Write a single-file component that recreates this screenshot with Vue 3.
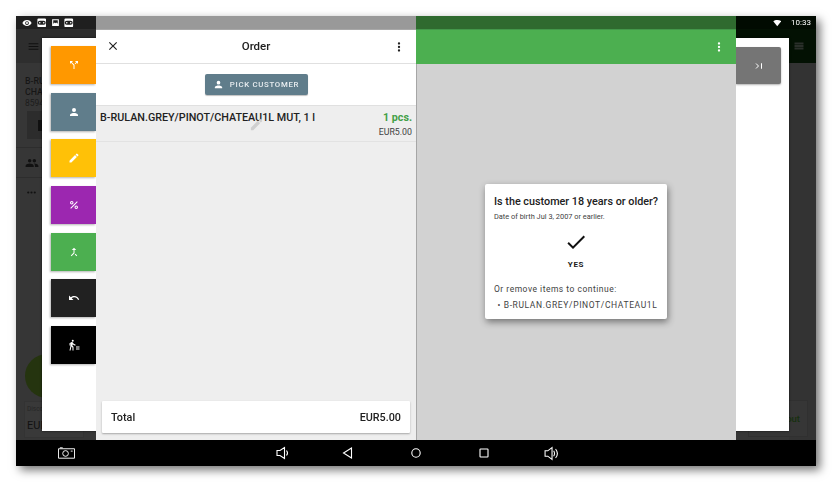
<script setup>
const actions = [
  { name: 'split', color: '#ff9800', d: 'M14 4l2.3 2.3-2.9 2.9 1.4 1.4 2.9-2.9L20 10V4zM10 4H4v6l2.3-2.3 4.7 4.7V20h2v-8.4L7.7 6.3z' },
  { name: 'customer', color: '#607d8b', d: 'M12 12a4 4 0 1 0 0-8 4 4 0 0 0 0 8zm0 2c-2.7 0-8 1.3-8 4v2h16v-2c0-2.7-5.3-4-8-4z' },
  { name: 'edit', color: '#ffc107', d: 'M3 17.25V21h3.75L17.81 9.94l-3.75-3.75zM20.71 7.04a1 1 0 0 0 0-1.41l-2.34-2.34a1 1 0 0 0-1.41 0l-1.83 1.83 3.75 3.75z' },
  { name: 'percent', color: '#9c27b0', d: 'M7.5 4a3.5 3.5 0 1 1 0 7 3.5 3.5 0 0 1 0-7zm0 2a1.5 1.5 0 1 0 0 3 1.5 1.5 0 0 0 0-3zm9 7a3.5 3.5 0 1 1 0 7 3.5 3.5 0 0 1 0-7zm0 2a1.5 1.5 0 1 0 0 3 1.5 1.5 0 0 0 0-3zM18 4.6l1.4 1.4L6 19.4 4.6 18z' },
  { name: 'merge', color: '#4caf50', d: 'M17 20.41L18.41 19 15 15.59 13.59 17 17 20.41zM7.5 8H11v5.59L5.59 19 7 20.41l6-6V8h3.5L12 3.5 7.5 8z' },
  { name: 'undo', color: '#212121', d: 'M12.5 8c-2.65 0-5.05 1-6.9 2.6L2 7v9h9l-3.62-3.62C8.77 11.2 10.54 10.5 12.5 10.5c3.54 0 6.55 2.31 7.6 5.5l2.37-.78C21.08 11.03 17.15 8 12.5 8z' },
  { name: 'walk', color: '#000000', d: 'M9.5 5.5a2 2 0 1 0 0-4 2 2 0 0 0 0 4zM5.9 8.9 3 23h2.1l1.8-8 2.1 2v6h2v-7.5l-2.1-2 .6-3C10.8 12 12.8 13 15 13v-2c-1.900 0-3.500-1-4.300-2.400l-1-1.600c-.4-.6-1-1-1.700-1-.3 0-.5.1-.8.1L3 8.300V13h2V9.600zM16 15h7v2h-7zM16 19h7v2h-7z' },
]
const reel = 'M4 1h16a3 3 0 0 1 3 3v16a3 3 0 0 1-3 3H4a3 3 0 0 1-3-3V4a3 3 0 0 1 3-3zm3 6a5 5 0 0 0 0 10h10a5 5 0 0 0 0-10zm0 3a2 2 0 1 1 0 4 2 2 0 0 1 0-4zm10 0a2 2 0 1 1 0 4 2 2 0 0 1 0-4z'
</script>

<template>
  <div class="page">
    <div class="screen">
      <div class="status">
        <div class="status-left">
          <svg class="st-icon eye" viewBox="0 0 24 24"><path d="M12 5C7 5 2.700 8.100 1 12c1.700 3.900 6 7 11 7s9.300-3.100 11-7c-1.700-3.900-6-7-11-7zm0 11.500a4.500 4.500 0 1 1 0-9 4.500 4.500 0 0 1 0 9zm0-7a2.500 2.500 0 1 0 0 5 2.500 2.500 0 0 0 0-5z" /></svg>
          <svg class="st-icon" viewBox="0 0 24 24"><path fill-rule="evenodd" :d="reel" /></svg>
          <svg class="st-icon small" viewBox="0 0 24 24"><path fill-rule="evenodd" d="M3 3h18v18H3zm3 3v9l4-3 3 2 2-2 3 3V6z" /></svg>
          <svg class="st-icon" viewBox="0 0 24 24"><path fill-rule="evenodd" :d="reel" /></svg>
        </div>
        <div class="status-right">
          <svg class="wifi" viewBox="0 0 24 24"><path d="M12 22 0 6.500C3 4 7.300 3 12 3s9 1 12 3.500z" /></svg>
          <span class="clock">10:33</span>
        </div>
      </div>

      <div class="back-app">
        <div class="back-bar">
          <svg class="menu" viewBox="0 0 24 24"><path d="M3 18h18v-2H3zm0-5h18v-2H3zm0-7v2h18V6z" /></svg>
          <svg class="list" viewBox="0 0 24 24"><path d="M3 5h18v4H3zm0 5h18v4H3zm0 5h18v4H3z" /></svg>
        </div>
        <div class="back-body">
          <div class="back-left">
            <div class="back-title">B-RULAN.GREY<br />CHATEAU1L</div>
            <div class="back-code">8594</div>
            <div class="back-btn"><span class="back-trash"></span></div>
            <div class="back-line"></div>
            <div class="back-row">
              <svg class="back-people" viewBox="0 0 24 24"><path d="M16 11a3 3 0 1 0 0-6 3 3 0 0 0 0 6zm-8 0a3 3 0 1 0 0-6 3 3 0 0 0 0 6zm0 2c-2.300 0-7 1.200-7 3.500V19h14v-2.500C15 14.200 10.300 13 8 13zm8 0h-1c1.200.8 2 2 2 3.500V19h6v-2.500c0-2.300-4.700-3.500-7-3.500z" /></svg>
            </div>
            <div class="back-line"></div>
            <div class="back-row">
              <svg class="back-dots" viewBox="0 0 24 24"><path d="M6 10a2 2 0 1 0 0 4 2 2 0 0 0 0-4zm6 0a2 2 0 1 0 0 4 2 2 0 0 0 0-4zm6 0a2 2 0 1 0 0 4 2 2 0 0 0 0-4z" /></svg>
            </div>
            <div class="back-circle"></div>
            <div class="back-discount">
              <span class="disc-label">Discount</span>
              <span class="disc-value">EUR5.00</span>
            </div>
          </div>
          <div class="back-right">
            <div class="checkout">Checkout</div>
          </div>
        </div>
      </div>

      <div class="overlay">
        <div class="sheet">
          <div class="actions">
            <button v-for="a in actions" :key="a.name" class="action" :style="{ background: a.color }">
              <svg viewBox="0 0 24 24"><path :d="a.d" /></svg>
            </button>
          </div>
          <div class="sheet-gap"></div>
          <div class="next-col">
            <button class="next">
              <svg viewBox="0 0 24 24" fill="none" stroke="#fff" stroke-width="2"><path d="M6 7l5 5-5 5M17 6.500v11" /></svg>
            </button>
          </div>
        </div>

        <div class="panels">
          <section class="order">
            <div class="order-top"></div>
            <header class="order-head">
              <svg class="close" viewBox="0 0 24 24"><path d="M19 6.410 17.590 5 12 10.590 6.410 5 5 6.410 10.590 12 5 17.590 6.410 19 12 13.410 17.590 19 19 17.590 13.410 12z" /></svg>
              <h1>Order</h1>
              <svg class="kebab" viewBox="0 0 24 24"><path d="M12 8a2 2 0 1 0 0-4 2 2 0 0 0 0 4zm0 2a2 2 0 1 0 0 4 2 2 0 0 0 0-4zm0 6a2 2 0 1 0 0 4 2 2 0 0 0 0-4z" /></svg>
            </header>
            <div class="customer-row">
              <button class="pick">
                <svg viewBox="0 0 24 24"><path d="M12 12a4 4 0 1 0 0-8 4 4 0 0 0 0 8zm0 2c-2.700 0-8 1.300-8 4v2h16v-2c0-2.700-5.300-4-8-4z" /></svg>
                <span>PICK CUSTOMER</span>
              </button>
            </div>
            <div class="order-list">
              <div class="line">
                <div class="line-top">
                  <span class="line-name">B-RULAN.GREY/PINOT/CHATEAU1L MUT, 1 l</span>
                  <span class="line-qty">1 pcs.</span>
                </div>
                <div class="line-price">EUR5.00</div>
                <svg class="line-edit" viewBox="0 0 24 24"><path d="M3 17.250V21h3.750L17.810 9.940l-3.750-3.750zM20.710 7.040a1 1 0 0 0 0-1.410l-2.340-2.340a1 1 0 0 0-1.410 0l-1.830 1.830 3.750 3.750z" /></svg>
              </div>
              <div class="total">
                <span>Total</span>
                <span>EUR5.00</span>
              </div>
            </div>
          </section>

          <section class="pay">
            <div class="pay-top"></div>
            <header class="pay-head">
              <svg class="kebab" viewBox="0 0 24 24"><path d="M12 8a2 2 0 1 0 0-4 2 2 0 0 0 0 4zm0 2a2 2 0 1 0 0 4 2 2 0 0 0 0-4zm0 6a2 2 0 1 0 0 4 2 2 0 0 0 0-4z" /></svg>
            </header>
            <div class="pay-body">
              <div class="dialog">
                <h2>Is the customer 18 years or older?</h2>
                <p class="dob">Date of birth Jul 3, 2007 or earlier.</p>
                <button class="yes">
                  <svg viewBox="0 0 24 24"><path d="M9 16.170 4.830 12l-1.420 1.410L9 19 21 7l-1.410-1.410z" /></svg>
                  <span>YES</span>
                </button>
                <p class="remove">Or remove items to continue:</p>
                <p class="item">• B-RULAN.GREY/PINOT/CHATEAU1L</p>
              </div>
            </div>
          </section>
        </div>
      </div>

      <div class="nav">
        <svg class="cam" viewBox="0 0 18 12" fill="none" stroke="#fff" stroke-width="1"><path d="M.5 1.500h17v10H.5z" /><circle cx="8" cy="6.500" r="3" /><path d="M2 .500h3M13.500 4h2" /></svg>
        <div class="nav-keys">
          <svg class="nk down" viewBox="0 0 14 14" fill="none" stroke="#fff" stroke-width="1.100"><path d="M1 4.500h3L8.500 1.500v11L4 9.500H1zM10.500 4.500c1.200 1.500 1.200 3.500 0 5" /></svg>
          <svg class="nk" viewBox="0 0 14 14" fill="none" stroke="#fff" stroke-width="1.100"><path d="M10.500 2v10L2.500 7z" /></svg>
          <svg class="nk" viewBox="0 0 14 14" fill="none" stroke="#fff" stroke-width="1.100"><circle cx="7" cy="7" r="4.200" /></svg>
          <svg class="nk" viewBox="0 0 14 14" fill="none" stroke="#fff" stroke-width="1.100"><rect x="3" y="3" width="8" height="8" rx=".6" /></svg>
          <svg class="nk vol" viewBox="0 0 14 14" fill="none" stroke="#fff" stroke-width="1"><path d="M1 4.500h2.500L7.500 1.500v11L3.500 9.500H1zM9 4.500c1 1.500 1 3.500 0 5M10.800 2.800c2 2.500 2 6 0 8.400" /></svg>
        </div>
      </div>
    </div>
  </div>
</template>

<style>
html, body { margin: 0; background: #fff; }
</style>

<style scoped>
* { box-sizing: border-box; }
.page {
  width: 832px;
  height: 482px;
  padding: 16px;
  font-family: Roboto, "Liberation Sans", sans-serif;
  background: #fff;
  overflow: hidden;
}
.screen {
  position: relative;
  width: 800px;
  height: 450px;
  display: flex;
  flex-direction: column;
  box-shadow: 4px 4px 9px rgba(0, 0, 0, 0.55);
  background: #333;
  filter: blur(0.35px);
}
.status {
  height: 13px;
  flex: none;
  display: flex;
  justify-content: space-between;
  align-items: center;
  background: #1f1f1f;
}
.status-left { display: flex; align-items: center; gap: 4.500px; padding-left: 6px; }
.st-icon { width: 9.500px; height: 9.500px; fill: #fff; }
.st-icon.eye { width: 10px; height: 10px; }
.st-icon.small { width: 9px; height: 9px; }
.status-right {
  height: 100%;
  width: 80px;
  background: #010b01;
  display: flex;
  align-items: center;
  justify-content: flex-end;
  gap: 10px;
  padding-right: 5px;
}
.wifi { width: 8.500px; height: 8px; fill: #fff; }
.clock { color: #fff; font-size: 8px; }

.back-app { flex: 1; display: flex; flex-direction: column; min-height: 0; }
.back-bar {
  height: 34px;
  flex: none;
  display: flex;
  justify-content: space-between;
  align-items: center;
  background: linear-gradient(90deg, #2e2e2e 0, #2e2e2e 50%, #031103 50%, #031103 100%);
  padding: 0 11px 0 11px;
}
.menu { width: 13px; height: 13px; fill: #111; }
.list { width: 12px; height: 12px; fill: #2a2f2a; }
.back-body { flex: 1; display: flex; justify-content: space-between; background: #363636; min-height: 0; }
.back-left { width: 26px; flex: none; padding-top: 13px; white-space: nowrap; }
.back-title { color: #161616; font-size: 8.800px; font-weight: 500; line-height: 11px; margin-left: 9px; }
.back-code { color: #1c1c1c; font-size: 8.500px; line-height: 10px; margin-left: 9px; }
.back-btn { width: 40px; height: 28px; margin: 3px 0 0 11px; background: #2c2c2c; display: flex; align-items: center; padding-left: 11px; }
.back-trash { width: 9px; height: 11px; background: #111; }
.back-line { height: 1px; width: 26px; margin-top: 0; background: #2d2d2d; }
.back-btn + .back-line { margin-top: 8px; }
.back-row { height: 29px; display: flex; align-items: center; padding-left: 9px; }
.back-people { width: 14px; height: 14px; fill: #111; }
.back-dots { width: 13px; height: 13px; fill: #111; }
.back-circle {
  width: 44px;
  height: 44px;
  margin: 147px 0 0 9px;
  border-radius: 50%;
  background: #25340f;
}
.back-discount {
  width: 60px;
  height: 37px;
  margin: 3px 0 0 8px;
  background: #393939;
  border: 1px solid #333;
  padding: 3px 2px;
  display: flex;
  flex-direction: column;
  gap: 6px;
}
.disc-label { font-size: 6.500px; color: #262626; }
.disc-value { font-size: 11px; color: #111; }
.back-right {
  width: 27px;
  flex: none;
  display: flex;
  justify-content: flex-end;
  align-items: flex-start;
  padding: 337px 8px 0 0;
  background: #333;
}
.checkout {
  width: 60px;
  flex: none;
  height: 37px;
  background: #363636;
  border: 1px solid #303030;
  color: #16300f;
  font-size: 9.500px;
  font-weight: 500;
  text-align: right;
  line-height: 35px;
  padding-right: 7px;
  white-space: nowrap;
}

.overlay {
  position: absolute;
  inset: 0 0 26px 0;
}
.sheet {
  position: absolute;
  left: 26px;
  top: 22px;
  width: 747px;
  height: 393px;
  background: #fff;
  display: flex;
  box-shadow: 0 0 2px rgba(0, 0, 0, 0.75);
}
.actions {
  width: 54px;
  flex: none;
  padding: 8px 0 0 9px;
  display: flex;
  flex-direction: column;
  gap: 8.630px;
}
.action {
  width: 45px;
  height: 38px;
  border: 0;
  padding: 0;
  display: flex;
  align-items: center;
  justify-content: center;
  box-shadow: -1px 1px 2px rgba(0, 0, 0, 0.3);
}
.action svg { width: 12px; height: 12px; fill: #fff; }
.sheet-gap { width: 640px; flex: none; }
.next-col { padding-top: 9px; }
.next {
  width: 45px;
  height: 37px;
  border: 0;
  padding: 0;
  background: #757575;
  border-radius: 0 2px 2px 0;
  display: flex;
  align-items: center;
  justify-content: center;
  box-shadow: 0 1px 2px rgba(0, 0, 0, 0.3);
}
.next svg { width: 12px; height: 12px; }

.panels {
  position: absolute;
  left: 80px;
  top: 0;
  bottom: 0;
  width: 640px;
  display: flex;
}
.order, .pay { width: 320px; display: flex; flex-direction: column; min-height: 0; }
.order { background: #eee; }
.order-top { height: 13px; background: #999; flex: none; }
.pay-top { height: 13px; background: #2f6a2f; flex: none; }
.order-head {
  height: 35px;
  flex: none;
  background: #fff;
  border-top: 1px solid #a8a8a8;
  border-bottom: 1px solid #e0e0e0;
  display: flex;
  align-items: center;
  justify-content: space-between;
  padding: 0 10px;
  color: #212121;
}
.order-head h1 { margin: -1px 0 0; font-size: 11.500px; font-weight: 500; color: #212121; }
.close { width: 14px; height: 14px; fill: #212121; margin-top: -1px; }
.kebab { width: 14px; height: 14px; fill: #212121; }
.customer-row {
  height: 41px;
  flex: none;
  background: #fff;
  display: flex;
  justify-content: center;
  align-items: center;
}
.pick {
  width: 103px;
  height: 21px;
  border: 0;
  border-radius: 2px;
  background: #607d8b;
  color: #fff;
  display: flex;
  align-items: center;
  justify-content: center;
  gap: 6px;
  padding: 0;
  font-family: inherit;
  box-shadow: 0 1px 1px rgba(0, 0, 0, 0.25);
}
.pick svg { width: 11px; height: 11px; fill: #fff; }
.pick span { font-size: 7.800px; font-weight: 500; letter-spacing: 0.700px; color: #e8edf0; }
.order-list { flex: 1; display: flex; flex-direction: column; min-height: 0; }
.line {
  height: 37px;
  flex: none;
  position: relative;
  background: #eee;
  border-top: 1px solid #e0e0e0;
  border-bottom: 1px solid #e2e2e2;
  padding: 5px 4px 0 4px;
}
.line-top { display: flex; justify-content: space-between; align-items: baseline; }
.line-name { font-size: 10.750px; font-weight: 500; color: #212121; white-space: nowrap; }
.line-qty { font-size: 10.700px; font-weight: 700; color: #43a047; }
.line-price { font-size: 8.800px; color: #424242; text-align: right; margin-top: 3px; }
.line-edit { position: absolute; left: 153px; top: 11px; width: 15px; height: 15px; fill: #cfcfcf; }
.total {
  margin: auto 6px 7px;
  height: 32px;
  background: #fff;
  display: flex;
  justify-content: space-between;
  align-items: center;
  padding: 1px 9px 0;
  font-size: 10.800px;
  font-weight: 500;
  color: #212121;
  box-shadow: 0 1px 2px rgba(0, 0, 0, 0.3);
  border-radius: 1px;
}
.pay-head {
  height: 35px;
  flex: none;
  background: #4caf50;
  border-top: 1px solid #43974a;
  display: flex;
  align-items: center;
  justify-content: flex-end;
  padding-right: 10px;
}
.pay-head .kebab { fill: #fff; }
.pay-body {
  flex: 1;
  background: #d2d2d2;
  border-left: 1px solid #a6a6a6;
  display: flex;
  align-items: center;
  justify-content: center;
  min-height: 0;
  padding-right: 1px;
}
.dialog {
  width: 182px;
  height: 135px;
  background: #fff;
  border-radius: 2px;
  box-shadow: 1px 3px 7px rgba(0, 0, 0, 0.45);
  padding: 11px 9px 0;
  color: #212121;
  display: flex;
  flex-direction: column;
  margin-top: -1px;
}
.dialog h2 { margin: 0; font-size: 10.800px; font-weight: 500; line-height: 13px; white-space: nowrap; }
.dob { margin: 4px 0 0; font-size: 7.400px; line-height: 9px; color: #424242; white-space: nowrap; }
.yes {
  border: 0;
  background: none;
  padding: 0;
  margin-top: 9px;
  display: flex;
  flex-direction: column;
  align-items: center;
  font-family: inherit;
}
.yes svg { width: 24px; height: 24px; fill: #111; display: block; }
.yes span { font-size: 8px; font-weight: 700; letter-spacing: 0.700px; line-height: 10px; margin-top: 6px; color: #212121; }
.remove { margin: 14px 0 0; font-size: 8.500px; letter-spacing: 0.500px; line-height: 10px; color: #424242; white-space: nowrap; }
.item { margin: 6px 0 0 3.500px; font-size: 8.500px; letter-spacing: 0.620px; line-height: 10px; color: #424242; white-space: nowrap; }

.nav {
  height: 26px;
  flex: none;
  background: #000;
  position: relative;
  z-index: 1;
  display: flex;
  align-items: center;
  padding-left: 42px;
}
.cam { width: 17px; height: 12px; }
.nav-keys { display: flex; align-items: center; gap: 54px; margin-left: 201px; }
.nk { width: 14px; height: 14px; }
.nk.down { margin-right: -3px; }
.nk.vol { width: 15px; height: 15px; margin-left: -1px; }
</style>
